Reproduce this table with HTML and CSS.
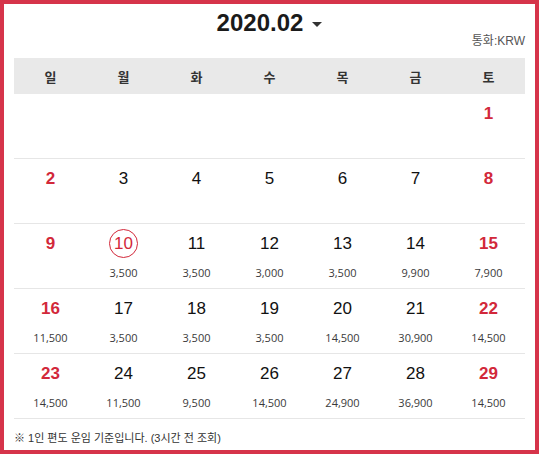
FILE: index.html
```html
<!DOCTYPE html>
<html lang="ko">
<head>
<meta charset="utf-8">
<link rel="stylesheet" href="styles.css">
</head>
<body>
<div class="frame">
  <div class="head">
    <div class="title"><span class="ym">2020.02</span><span class="caret"></span></div>
    <div class="currency">통화:KRW</div>
  </div>
  <div class="dow">
    <div>일</div><div>월</div><div>화</div><div>수</div><div>목</div><div>금</div><div>토</div>
  </div>
  <div class="week">
    <div class="day"></div><div class="day"></div><div class="day"></div><div class="day"></div><div class="day"></div><div class="day"></div>
    <div class="day we"><span class="num">1</span></div>
  </div>
  <div class="week">
    <div class="day we"><span class="num">2</span></div>
    <div class="day"><span class="num">3</span></div>
    <div class="day"><span class="num">4</span></div>
    <div class="day"><span class="num">5</span></div>
    <div class="day"><span class="num">6</span></div>
    <div class="day"><span class="num">7</span></div>
    <div class="day we"><span class="num">8</span></div>
  </div>
  <div class="week">
    <div class="day we"><span class="num">9</span></div>
    <div class="day today"><span class="num">10</span><span class="price">3,500</span></div>
    <div class="day"><span class="num">11</span><span class="price">3,500</span></div>
    <div class="day"><span class="num">12</span><span class="price">3,000</span></div>
    <div class="day"><span class="num">13</span><span class="price">3,500</span></div>
    <div class="day"><span class="num">14</span><span class="price">9,900</span></div>
    <div class="day we"><span class="num">15</span><span class="price">7,900</span></div>
  </div>
  <div class="week">
    <div class="day we"><span class="num">16</span><span class="price">11,500</span></div>
    <div class="day"><span class="num">17</span><span class="price">3,500</span></div>
    <div class="day"><span class="num">18</span><span class="price">3,500</span></div>
    <div class="day"><span class="num">19</span><span class="price">3,500</span></div>
    <div class="day"><span class="num">20</span><span class="price">14,500</span></div>
    <div class="day"><span class="num">21</span><span class="price">30,900</span></div>
    <div class="day we"><span class="num">22</span><span class="price">14,500</span></div>
  </div>
  <div class="week">
    <div class="day we"><span class="num">23</span><span class="price">14,500</span></div>
    <div class="day"><span class="num">24</span><span class="price">11,500</span></div>
    <div class="day"><span class="num">25</span><span class="price">9,500</span></div>
    <div class="day"><span class="num">26</span><span class="price">14,500</span></div>
    <div class="day"><span class="num">27</span><span class="price">24,900</span></div>
    <div class="day"><span class="num">28</span><span class="price">36,900</span></div>
    <div class="day we"><span class="num">29</span><span class="price">14,500</span></div>
  </div>
  <div class="note">※ 1인 편도 운임 기준입니다. (3시간 전 조회)</div>
</div>
</body>
</html>
```

FILE: styles.css
```css
* { box-sizing: border-box; }
html, body { margin: 0; padding: 0; background: #fff; }
body {
  font-family: "Liberation Sans", Arial, "Noto Sans CJK KR", sans-serif;
  color: #111;
}
.frame {
  width: 539px;
  height: 454px;
  border: 4px solid #d6344a;
  padding: 0 10px;
  overflow: hidden;
}
.head {
  height: 54px;
  display: flex;
  flex-direction: column;
}
.title {
  margin-top: 5px;
  height: 28px;
  line-height: 28px;
  display: flex;
  justify-content: center;
  align-items: center;
}
.ym {
  font-size: 24px;
  font-weight: bold;
  color: #1a1a1a;
}
.caret {
  width: 0;
  height: 0;
  margin-left: 9px;
  margin-top: 3px;
  border-left: 5px solid transparent;
  border-right: 5px solid transparent;
  border-top: 5px solid #333;
}
.currency {
  margin-top: -4px;
  align-self: flex-end;
  font-size: 12px;
  line-height: 16px;
  color: #555;
  font-family: "Liberation Sans", "Noto Sans CJK KR", sans-serif;
}
.dow {
  display: grid;
  grid-template-columns: repeat(7, 1fr);
  height: 36px;
  background: #e9e9e9;
  align-items: center;
  text-align: center;
  font-family: "Noto Sans CJK KR", sans-serif;
  font-weight: bold;
  font-size: 13px;
  color: #333;
}
.week {
  display: grid;
  grid-template-columns: repeat(7, 1fr);
  height: 65px;
  border-bottom: 1px solid #e6e6e6;
}
.day {
  display: flex;
  flex-direction: column;
  align-items: center;
}
.num {
  margin-top: 5px;
  width: 29px;
  height: 29px;
  line-height: 29px;
  border-radius: 50%;
  text-align: center;
  font-size: 17px;
  color: #111;
}
.we .num {
  color: #d2283a;
  font-weight: bold;
}
.today .num {
  border: 1px solid #d2283a;
  line-height: 27px;
  color: #d2283a;
}
.price {
  margin-top: 7px;
  font-family: "Open Sans", sans-serif;
  font-size: 11px;
  line-height: 16px;
  color: #3a3a3a;
}
.note {
  margin-top: 10px;
  font-size: 11px;
  line-height: 18px;
  color: #333;
  font-family: "Liberation Sans", "Noto Sans CJK KR", sans-serif;
}
```
